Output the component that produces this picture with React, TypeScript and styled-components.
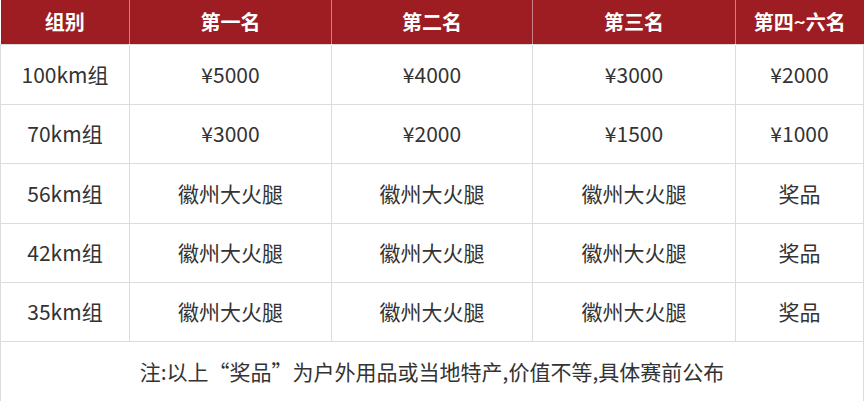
import React from "react";
import styled, { createGlobalStyle } from "styled-components";

const Global = createGlobalStyle`
  html, body { margin: 0; padding: 0; background: #ffffff; }
  body { font-family: "Noto Sans CJK SC", "Noto Sans", sans-serif; }
`;

const Table = styled.table`
  width: 863px;
  border-collapse: collapse;
  table-layout: fixed;
  font-family: "Noto Sans CJK SC", "Noto Sans", sans-serif;
`;

const HeadRow = styled.tr`
  height: 44px;
  background: #9e1d23;
`;

const HeadCell = styled.th`
  color: #ffffff;
  font-size: 20px;
  font-weight: 700;
  text-align: center;
  padding: 0;
  border-left: 1px solid rgba(255, 255, 255, 0.45);
  &:first-child { border-left: none; }
  line-height: 1;
`;

const BodyRow = styled.tr<{ $h: number }>`
  height: ${(p) => p.$h}px;
`;

const Cell = styled.td`
  color: #333333;
  font-size: 21px;
  text-align: center;
  padding: 0;
  border: 1px solid #dcdcdc;
  line-height: 1;
`;

const NoteCell = styled(Cell)`
  font-size: 21px;
`;

const widths = [129, 202, 201, 203, 128];
const headers = ["组别", "第一名", "第二名", "第三名", "第四~六名"];
const rows: { h: number; cells: string[] }[] = [
  { h: 60, cells: ["100km组", "¥5000", "¥4000", "¥3000", "¥2000"] },
  { h: 59, cells: ["70km组", "¥3000", "¥2000", "¥1500", "¥1000"] },
  { h: 60, cells: ["56km组", "徽州大火腿", "徽州大火腿", "徽州大火腿", "奖品"] },
  { h: 59, cells: ["42km组", "徽州大火腿", "徽州大火腿", "徽州大火腿", "奖品"] },
  { h: 59, cells: ["35km组", "徽州大火腿", "徽州大火腿", "徽州大火腿", "奖品"] },
];

export default function App() {
  return (
    <>
      <Global />
      <Table>
        <colgroup>
          {widths.map((w, i) => (
            <col key={i} style={{ width: w }} />
          ))}
        </colgroup>
        <thead>
          <HeadRow>
            {headers.map((h) => (
              <HeadCell key={h}>{h}</HeadCell>
            ))}
          </HeadRow>
        </thead>
        <tbody>
          {rows.map((r, i) => (
            <BodyRow key={i} $h={r.h}>
              {r.cells.map((c, j) => (
                <Cell key={j}>{c}</Cell>
              ))}
            </BodyRow>
          ))}
          <BodyRow $h={60}>
            <NoteCell colSpan={5}>注:以上“奖品”为户外用品或当地特产,价值不等,具体赛前公布</NoteCell>
          </BodyRow>
        </tbody>
      </Table>
    </>
  );
}
